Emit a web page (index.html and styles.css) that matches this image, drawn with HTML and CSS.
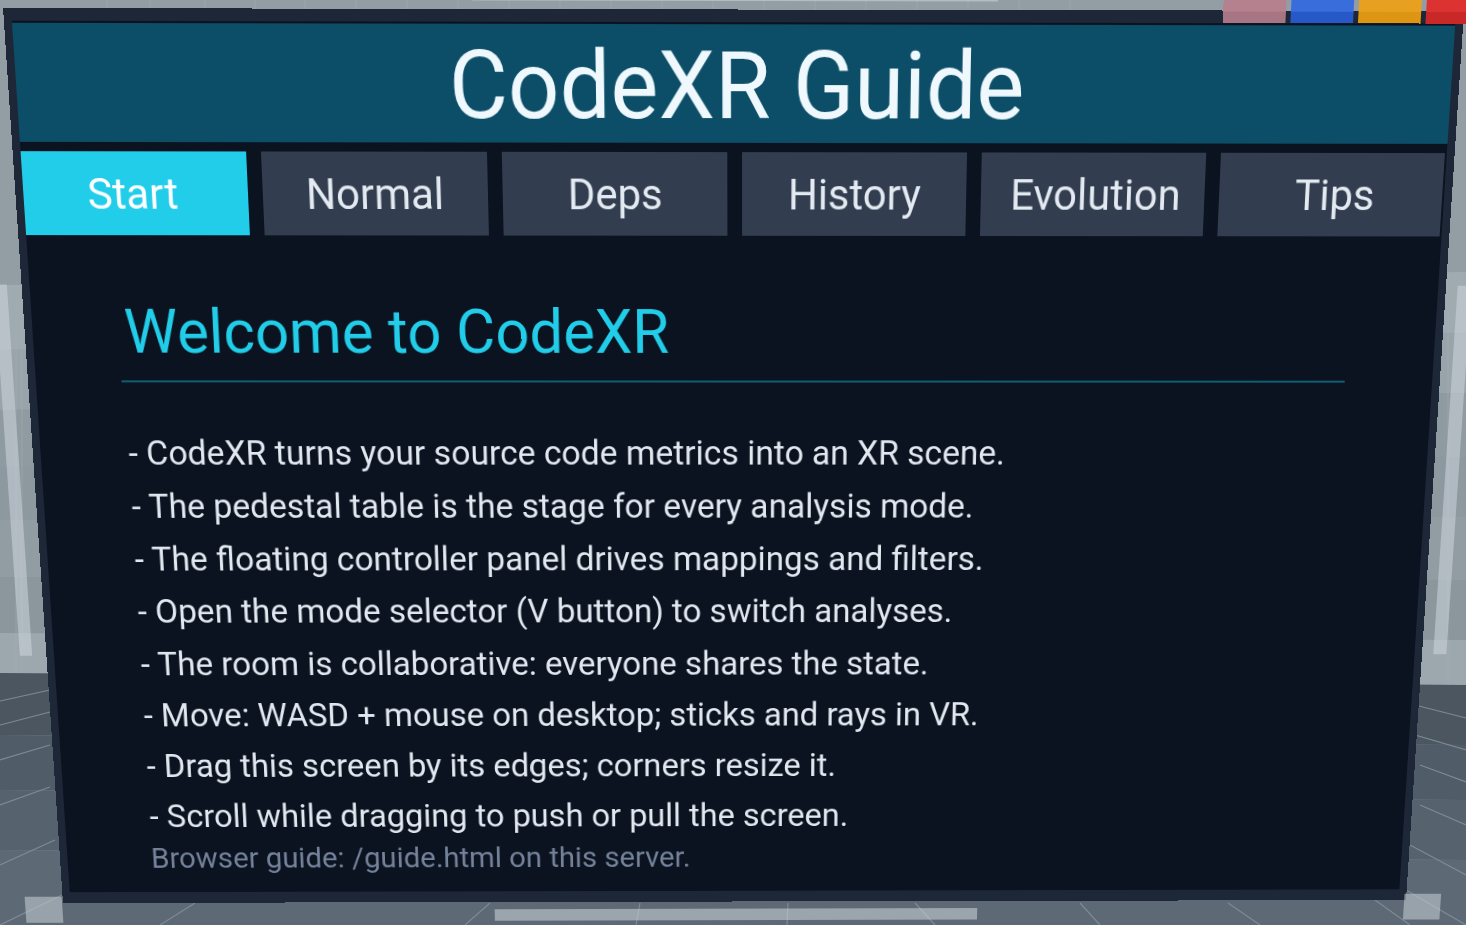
FILE: index.html
```html
<!DOCTYPE html>
<html lang="en">
<head>
<meta charset="utf-8">
<title>CodeXR Guide</title>
<link rel="stylesheet" href="styles.css">
</head>
<body>
<svg class="scene" viewBox="0 0 1466 925" aria-hidden="true">
  <polygon class="w1" points="0,0 1466,0 1466,272 0,285"/>
  <polygon class="w2" points="0,285 1466,272 1466,333 0,350"/>
  <polygon class="w3" points="0,350 1466,333 1466,393 0,410"/>
  <polygon class="w4" points="0,410 1466,393 1466,457 0,467"/>
  <polygon class="w5" points="0,467 1466,457 1466,517 0,520"/>
  <polygon class="w6" points="0,520 1466,517 1466,580 0,577"/>
  <polygon class="w7" points="0,577 1466,580 1466,640 0,633"/>
  <polygon class="w8" points="0,633 1466,640 1466,685 0,673"/>
  <g class="wall-lines">
    <path d="M107 0V10M150 0V10M205 0V10M255 0V10M305 0V10M356 0V10M407 0V10M458 0V10M509 0V10M560 0V10M611 0V10M662 0V10M713 0V10M764 0V10M815 0V10M866 0V10M917 0V10M968 0V10M1019 0V10M1070 0V10"/>
    <path d="M16 285V673M22 285V673M1448 272V685"/>
  </g>
  <polygon class="f1" points="0,673 1466,685 1466,745 0,735"/>
  <polygon class="f2" points="0,735 1466,745 1466,800 0,790"/>
  <polygon class="f3" points="0,790 1466,800 1466,860 0,850"/>
  <polygon class="f4" points="0,850 1466,860 1466,925 0,925"/>
  <g class="floor-lines">
    <path d="M0 701L50 690M0 725L50 712M0 760L50 745M0 805L50 787M0 865L55 840M0 925L62 895"/>
    <path d="M465 925L490 903M636 925L640 903M787 925L788 903M935 925L915 903"/>
    <path d="M160 925L195 903M1100 925L1080 903M1260 925L1228 903M1410 925L1375 900"/>
    <path d="M1415 705L1466 718M1415 735L1466 750M1420 765L1466 782M1420 805L1466 825M1410 845L1466 875M1406 890L1466 925"/>
  </g>
</svg>
<main class="plane">
  <span class="rail rail-top"></span>
  <span class="rail rail-left"></span>
  <span class="rail rail-right"></span>
  <span class="rail rail-bottom"></span>
  <span class="rail corner corner-bl"></span>
  <span class="rail corner corner-br"></span>
  <section class="frame">
    <div class="screen">
      <header class="title-bar"><h1>CodeXR Guide</h1></header>
      <nav class="tabs">
        <a class="tab active">Start</a>
        <a class="tab">Normal</a>
        <a class="tab">Deps</a>
        <a class="tab">History</a>
        <a class="tab">Evolution</a>
        <a class="tab">Tips</a>
      </nav>
      <article class="content">
        <h2>Welcome to CodeXR</h2>
        <ul class="lines">
          <li>- CodeXR turns your source code metrics into an XR scene.</li>
          <li>- The pedestal table is the stage for every analysis mode.</li>
          <li>- The floating controller panel drives mappings and filters.</li>
          <li>- Open the mode selector (V button) to switch analyses.</li>
          <li>- The room is collaborative: everyone shares the state.</li>
          <li>- Move: WASD + mouse on desktop; sticks and rays in VR.</li>
          <li>- Drag this screen by its edges; corners resize it.</li>
          <li>- Scroll while dragging to push or pull the screen.</li>
        </ul>
        <p class="hint">Browser guide: /guide.html on this server.</p>
      </article>
    </div>
  </section>
  <div class="swatches">
    <span class="swatch pink"></span>
    <span class="swatch blue"></span>
    <span class="swatch orange"></span>
    <span class="swatch red"></span>
  </div>
</main>
</body>
</html>
```
FILE: styles.css
```css
html, body {
  margin: 0;
  width: 1466px;
  height: 925px;
  overflow: hidden;
  background: #8a959c;
  font-family: Roboto, "Liberation Sans", sans-serif;
}
.scene { position: absolute; left: 0; top: 0; width: 1466px; height: 925px; display: block; }
.w1 { fill: #929da4; }
.w2 { fill: #a0abb1; }
.w3 { fill: #99a4aa; }
.w4 { fill: #8f9ba1; }
.w5 { fill: #8d989f; }
.w6 { fill: #929da3; }
.w7 { fill: #8b979d; }
.w8 { fill: #9da8ae; }
.f1 { fill: #4b5660; }
.f2 { fill: #505c67; }
.f3 { fill: #56636f; }
.f4 { fill: #5d6a76; }
.wall-lines path { stroke: #a4afb5; stroke-width: 1; fill: none; opacity: .5; }
.floor-lines path { stroke: #7d8a95; stroke-width: 1.2; fill: none; }

.plane {
  position: absolute;
  left: 0;
  top: 0;
  width: 1460px;
  height: 920px;
  transform-origin: 0 0;
  transform: matrix3d(1.00775, 0.002108, 0, 0.000004826,
                      0.071254, 1.05936, 0, 0.00009583,
                      0, 0, 1, 0,
                      3, 8, 0, 1);
}
.frame {
  box-sizing: border-box;
  width: 1460px;
  height: 920px;
  padding: 12px 8px;
  background: #1e2737;
}
.screen {
  box-sizing: border-box;
  height: 896px;
  padding-top: 2px;
  background: #0b1320;
  overflow: hidden;
}
.title-bar {
  box-sizing: border-box;
  height: 114px;
  padding: 5px 0 0 2px;
  background: #0c4e68;
  display: flex;
  align-items: center;
  justify-content: center;
}
.title-bar h1 {
  margin: 0;
  font-size: 90.8px;
  font-weight: 400;
  color: #eef8fd;
  line-height: 1;
}
.tabs {
  display: grid;
  grid-template-columns: repeat(6, 1fr);
  gap: 15px;
  height: 82px;
  margin: 9px 1.5px 0 -1px;
}
.tab {
  display: flex;
  align-items: center;
  justify-content: center;
  background: #323e50;
  color: #e4eaf1;
  font-size: 42.5px;
}
.tab:nth-child(1) { padding-right: 5px; }
.tab:nth-child(2) { padding-right: 1px; }
.tab:nth-child(5) { padding-left: 5px; }
.tab:nth-child(6) { padding-left: 7px; }
.tab.active { background: #21cde8; color: #fff; }
.content { padding: 60px 91px 0 88px; }
.content h2 {
  margin: 0;
  padding: 0 0 13px 6px;
  line-height: 72px;
  font-size: 61.5px;
  font-weight: 400;
  color: #21cde8;
  border-bottom: 2px solid #0f5f72;
}
.lines { list-style: none; margin: 45px 0 0; padding: 0 0 0 3px; }
.lines li { line-height: 55.15px; font-size: 35px; color: #e2e8f0; white-space: nowrap; }
.hint { margin: 0; padding-left: 2px; line-height: 37px; font-size: 31.6px; color: #74829a; white-space: nowrap; }

.rail { position: absolute; display: block; background: rgba(205, 214, 220, .55); }
.rail-top { left: 467px; top: -21px; width: 525px; height: 13px; }
.rail-bottom { left: 467px; top: 928px; width: 525px; height: 13px; }
.rail-left { left: -28px; top: 268px; width: 13px; height: 382px; }
.rail-right { left: 1472px; top: 268px; width: 14px; height: 382px; }
.corner { width: 40px; height: 29px; background: rgba(190, 200, 206, .6); }
.corner-bl { left: -41px; top: 913px; }
.corner-br { left: 1458px; top: 913px; }

.swatches {
  position: absolute;
  left: 1218px;
  top: -20px;
  display: flex;
  gap: 5px;
}
.swatch { display: block; width: 63px; height: 32px; }
.pink { background: linear-gradient(#b5818f 0 66%, #a87585 66%); }
.blue { background: linear-gradient(#3a6ddc 0 66%, #2658c8 66%); }
.orange { background: linear-gradient(#e8a020 0 66%, #dd9512 66%); }
.red { background: linear-gradient(#dc3232 0 66%, #c82828 66%); }
```
